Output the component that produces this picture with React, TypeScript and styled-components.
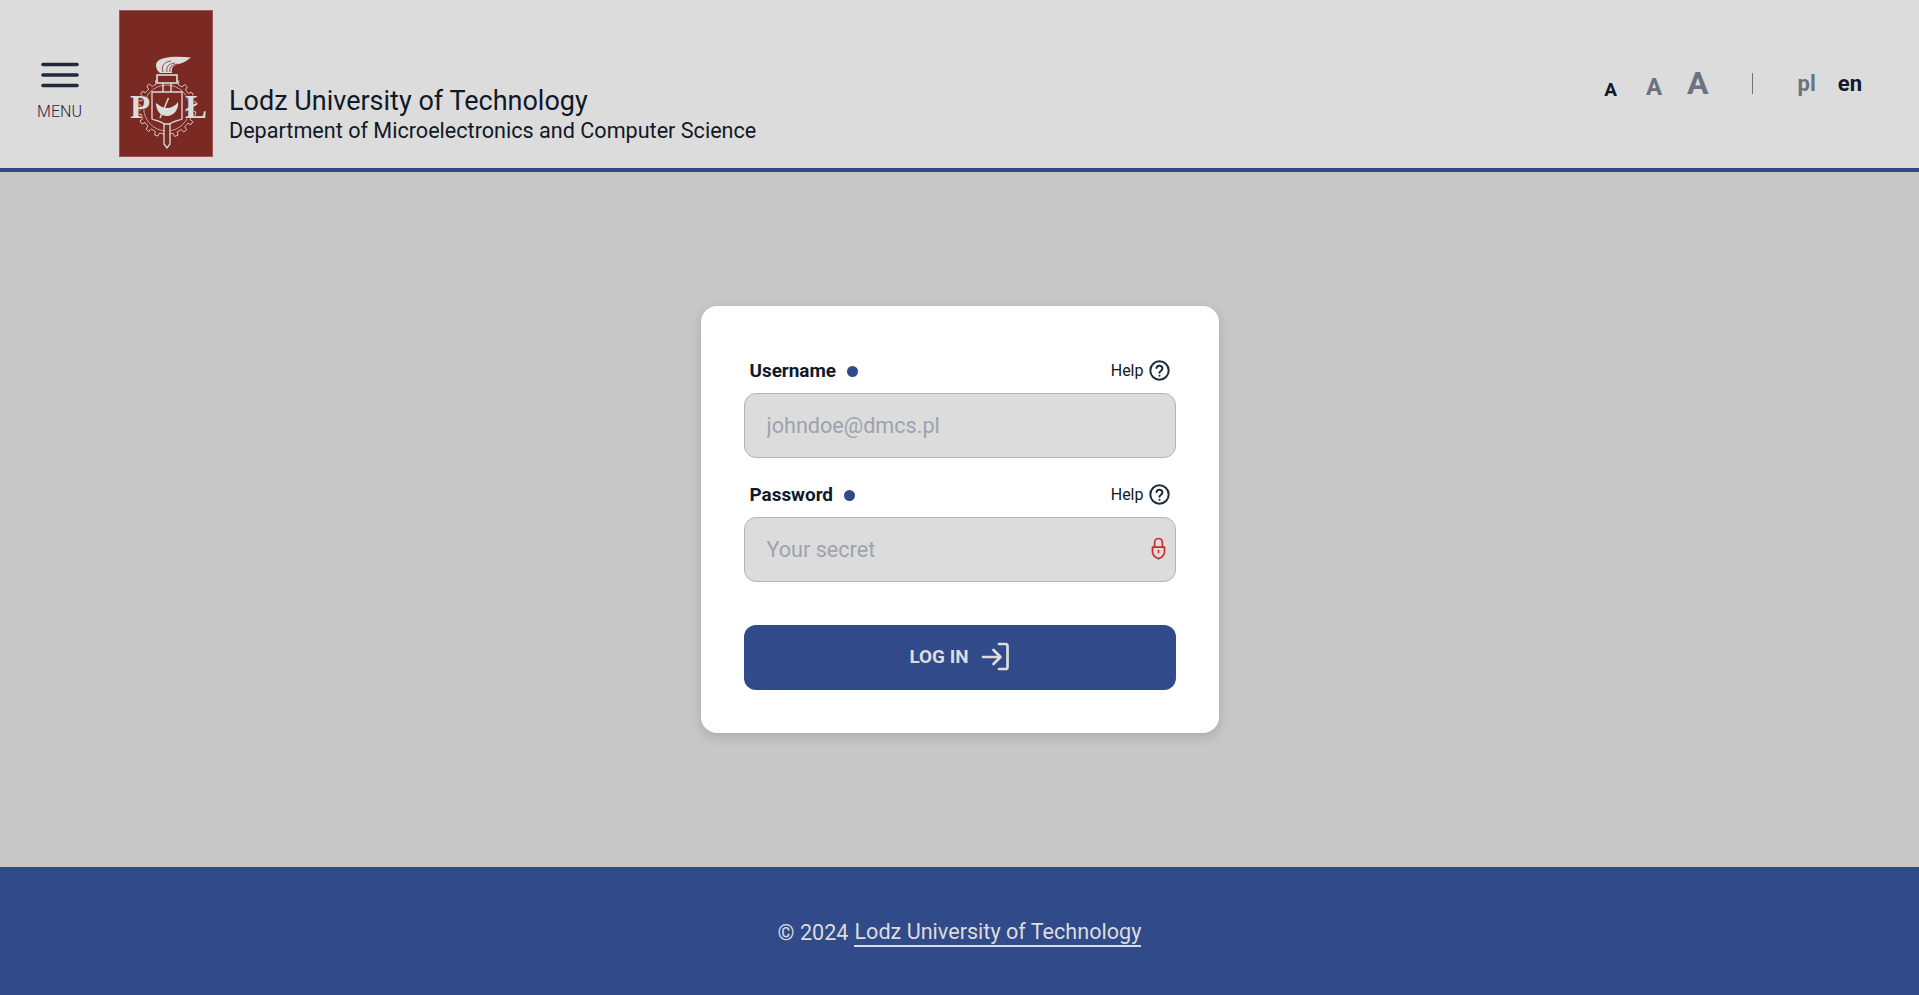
import React from "react";
import styled, { createGlobalStyle } from "styled-components";

const BLUE = "#304a8a";

const Global = createGlobalStyle`
  html, body { margin: 0; padding: 0; }
  body { font-family: Roboto, "Liberation Sans", sans-serif; color: #111827; }
  * { box-sizing: border-box; }
`;

const Page = styled.div`
  height: 995px;
  display: flex;
  flex-direction: column;
  background: #c7c7c7;
  overflow: hidden;
`;

const Header = styled.header`
  height: 172px;
  flex: none;
  background: #dcdcdc;
  border-bottom: 4px solid ${BLUE};
  display: flex;
  align-items: flex-start;
  padding: 10px 0 0 0;
`;

const MenuButton = styled.div`
  width: 119px;
  flex: none;
  padding-top: 50px;
  display: flex;
  flex-direction: column;
  align-items: center;
`;

const MenuLabel = styled.span`
  font-size: 16px;
  line-height: 20px;
  font-weight: 300;
  color: #1f2937;
  margin-top: 12px;
`;

const Titles = styled.div`
  margin-left: 16px;
  padding-top: 75px;
  display: flex;
  flex-direction: column;
`;

const Title = styled.div`
  font-size: 27px;
  line-height: 32px;
  font-weight: 400;
  color: #111827;
`;

const Subtitle = styled.div`
  font-size: 21.6px;
  line-height: 28px;
  font-weight: 400;
  color: #111827;
`;

const Controls = styled.div`
  margin-left: auto;
  height: 89px;
  display: flex;
  align-items: flex-end;
  padding-right: 57px;
`;

const SizeLetter = styled.span<{ $size: number; $active?: boolean; $gap: number }>`
  font-size: ${(p) => p.$size}px;
  font-weight: 700;
  line-height: 1;
  color: ${(p) => (p.$active ? "#111827" : "#6b7280")};
  margin-right: ${(p) => p.$gap}px;
`;

const Divider = styled.span`
  width: 1px;
  height: 21px;
  background: #6b7280;
  margin: 0 45px 5px 43px;
`;

const Lang = styled.span<{ $active?: boolean }>`
  font-size: 22px;
  font-weight: 700;
  line-height: 31px;
  color: ${(p) => (p.$active ? "#111827" : "#6b7280")};
  margin-left: ${(p) => (p.$active ? 22 : 0)}px;
`;

const Main = styled.main`
  flex: 1;
  display: flex;
  align-items: flex-start;
  justify-content: center;
  padding-top: 134px;
`;

const Card = styled.form`
  width: 518px;
  height: 427px;
  background: #fff;
  border-radius: 16px;
  box-shadow: 0 4px 12px rgba(0, 0, 0, 0.15);
  padding: 50px 43px 0;
  display: flex;
  flex-direction: column;
`;

const LabelRow = styled.div`
  height: 37px;
  display: flex;
  align-items: flex-start;
  justify-content: space-between;
  padding: 3px 6px 0;
`;

const LabelWrap = styled.div`
  display: flex;
  align-items: center;
  height: 24px;
`;

const Label = styled.label`
  font-size: 18.9px;
  font-weight: 700;
  line-height: 24px;
  color: #111827;
`;

const Dot = styled.span`
  width: 11px;
  height: 11px;
  border-radius: 50%;
  background: ${BLUE};
  margin-left: 11px;
`;

const Help = styled.div`
  display: flex;
  align-items: center;
  gap: 5px;
  height: 22px;
  font-size: 16px;
  color: #111827;
`;

const InputBox = styled.div`
  position: relative;
  height: 65px;
  margin-bottom: 22px;
`;

const Input = styled.input`
  width: 100%;
  height: 100%;
  background: #dcdcdc;
  border: 1px solid #b5b5b5;
  border-radius: 12px;
  padding: 0 22px 1px;
  font: 400 21.6px Roboto, sans-serif;
  outline: none;
  &::placeholder { color: #9ca3af; opacity: 1; }
`;

const LockIcon = styled.svg`
  position: absolute;
  right: 10px;
  top: 20px;
`;

const Submit = styled.button`
  margin-top: 21px;
  height: 65px;
  border: 0;
  border-radius: 12px;
  padding: 0 0 3px;
  background: ${BLUE};
  color: #dcdcdc;
  font: 700 18.9px Roboto, sans-serif;
  display: flex;
  align-items: center;
  justify-content: center;
  gap: 12px;
`;

const Footer = styled.footer`
  height: 128px;
  flex: none;
  background: ${BLUE};
  color: #dcdcdc;
  display: flex;
  align-items: center;
  justify-content: center;
  font-size: 21.6px;
  gap: 6px;
  padding-top: 2px;
`;

const FooterLink = styled.a`
  color: inherit;
  text-decoration: none;
  border-bottom: 2px solid #dcdcdc;
  line-height: 27px;
`;

const gearPath = (() => {
  const teeth = 18;
  const cx = 47.7;
  const cy = 98;
  const pts: string[] = [];
  for (let i = 0; i < teeth; i++) {
    const step = (Math.PI * 2) / teeth;
    const a = i * step;
    const at = (r: number, t: number) =>
      `${(cx + r * Math.cos(a + t * step)).toFixed(2)} ${(cy + r * Math.sin(a + t * step)).toFixed(2)}`;
    pts.push(`${i === 0 ? "M" : "L"}${at(26, 0)}`, `L${at(26, 0.3)}`, `L${at(29.5, 0.38)}`, `L${at(29.5, 0.72)}`, `L${at(26, 0.8)}`);
  }
  return pts.join(" ") + " Z";
})();

const Logo = () => (
  <svg width="94" height="147" viewBox="0 0 94 147" style={{ flex: "none" }}>
    <rect x="0.5" y="0.5" width="93" height="146" fill="#7a2a22" stroke="#a0554e" />
    <path d={gearPath} fill="none" stroke="#d8c4c0" strokeWidth="1" />
    <circle cx="47.7" cy="98" r="23" fill="none" stroke="#d8c4c0" strokeWidth=".8" />
    <path d="M41 63 C37 60 36 55 38 52 C42 47 55 46 72 47.5 C68 51 64 53 60 54 C54 55 52 58 53 63 Z" fill="#dcdcdc" />
    <path d="M44 62 C42 56 45 52 52 51 M48 62 C47 57 49 54 56 53 M51 62 C50 58 52 55 59 54" fill="none" stroke="#7a2a22" strokeWidth=".8" />
    <rect x="38" y="65" width="20" height="8" fill="#7a2a22" stroke="#dcdcdc" strokeWidth="1.6" />
    <path d="M44 73 V82 M52 73 V82" stroke="#dcdcdc" strokeWidth="1.4" />
    <path d="M33 82 H63 V109 C58 111 52 112 48 116 C44 112 38 111 33 109 Z" fill="#7a2a22" stroke="#dcdcdc" strokeWidth="1.3" />
    <path d="M37 93 C41 96 44 98 48 98 C52 98 56 96 59 92 C60 99 55 106 48 106 C41 106 37 100 37 93 Z" fill="#dcdcdc" />
    <path d="M49.5 88 L41 108" stroke="#dcdcdc" strokeWidth="1.5" />
    <path d="M45 114 H51 V134 L48 138 L45 134 Z" fill="#7a2a22" stroke="#dcdcdc" strokeWidth="1.3" />
    <text x="11" y="108" fontFamily="'Liberation Serif', serif" fontWeight="700" fontSize="33" fill="#dcdcdc" stroke="#7a2a22" strokeWidth="1" paintOrder="stroke">P</text>
    <text x="66" y="108" fontFamily="'Liberation Serif', serif" fontWeight="700" fontSize="33" fill="#dcdcdc" stroke="#7a2a22" strokeWidth="1" paintOrder="stroke">Ł</text>
  </svg>
);

const HelpIcon = () => (
  <svg width="21" height="21" viewBox="0 0 24 24" fill="none" stroke="#1f2937" strokeWidth="2.3" strokeLinecap="round" strokeLinejoin="round">
    <circle cx="12" cy="12" r="10.5" />
    <path d="M8.6 9.2a3.4 3.4 0 0 1 6.7 .9c0 2.2-3.3 2.6-3.3 4.4" />
    <path d="M12 18v.1" />
  </svg>
);

const HelpLink = () => (
  <Help>
    Help
    <HelpIcon />
  </Help>
);

export default function App() {
  return (
    <Page>
      <Global />
      <Header>
        <MenuButton>
          <svg width="40" height="30" viewBox="0 0 40 30" fill="none" stroke="#1f2937" strokeWidth="3.6" strokeLinecap="round">
            <path d="M3 4.5H37M3 15H37M3 25.5H37" />
          </svg>
          <MenuLabel>MENU</MenuLabel>
        </MenuButton>
        <Logo />
        <Titles>
          <Title>Lodz University of Technology</Title>
          <Subtitle>Department of Microelectronics and Computer Science</Subtitle>
        </Titles>
        <Controls>
          <SizeLetter $size={19} $active $gap={29}>A</SizeLetter>
          <SizeLetter $size={24} $gap={25}>A</SizeLetter>
          <SizeLetter $size={32} $gap={0}>A</SizeLetter>
          <Divider />
          <Lang>pl</Lang>
          <Lang $active>en</Lang>
        </Controls>
      </Header>
      <Main>
        <Card>
          <LabelRow>
            <LabelWrap>
              <Label>Username</Label>
              <Dot />
            </LabelWrap>
            <HelpLink />
          </LabelRow>
          <InputBox>
            <Input placeholder="johndoe@dmcs.pl" />
          </InputBox>
          <LabelRow>
            <LabelWrap>
              <Label>Password</Label>
              <Dot />
            </LabelWrap>
            <HelpLink />
          </LabelRow>
          <InputBox>
            <Input placeholder="Your secret" type="password" />
            <LockIcon width="15" height="23" viewBox="0 0 15 23" fill="none" stroke="#d02a2a" strokeWidth="1.7" strokeLinecap="round" strokeLinejoin="round">
              <path d="M3.6 10V5.4a3.9 3.9 0 0 1 7.8 0V10" />
              <path d="M1.5 10.2h12v5c0 3-3 5.2-6 6.6-3-1.4-6-3.6-6-6.6z" />
              <path d="M7.5 13.5v2" />
            </LockIcon>
          </InputBox>
          <Submit type="button">
            LOG IN
            <svg width="29" height="29" viewBox="0 0 29 29" fill="none" stroke="#dcdcdc" strokeWidth="2.7" strokeLinecap="round" strokeLinejoin="round">
              <path d="M2 15H19M12.5 8l7 7-7 7" />
              <path d="M18 2h6.5a2 2 0 0 1 2 2v21a2 2 0 0 1-2 2h-6.5" />
            </svg>
          </Submit>
        </Card>
      </Main>
      <Footer>
        © 2024 <FooterLink>Lodz University of Technology</FooterLink>
      </Footer>
    </Page>
  );
}
